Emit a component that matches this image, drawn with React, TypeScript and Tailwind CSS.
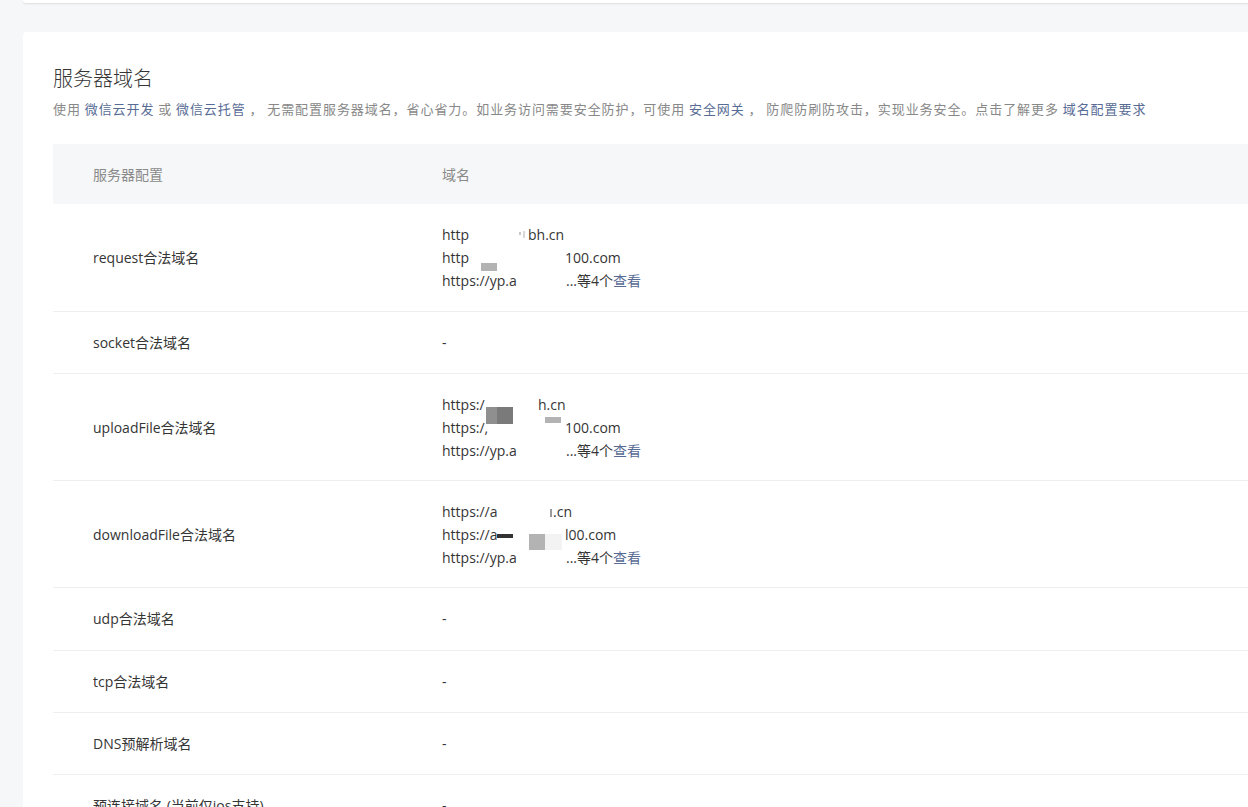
import React from "react";

const LINK = "text-[#576b95]";

type Blk = { l: number; t: number; w: number; h: number; c: string };

function Line({
  prefix,
  gap,
  suffix,
  more,
  blocks = [],
}: {
  prefix: string;
  gap: number;
  suffix: string;
  more?: boolean;
  blocks?: Blk[];
}) {
  return (
    <div className="relative flex h-[23px] items-center whitespace-nowrap">
      <span className="inline-block shrink-0" style={{ width: gap }}>
        {prefix}
      </span>
      <span>{suffix}</span>
      {more && (
        <>
          <span>...等4个</span>
          <span className={LINK}>查看</span>
        </>
      )}
      {blocks.map((b, i) => (
        <span
          key={i}
          className="absolute"
          style={{ left: b.l, top: b.t, width: b.w, height: b.h, background: b.c }}
        />
      ))}
    </div>
  );
}

function Row({
  label,
  pad,
  children,
}: {
  label: string;
  pad: string;
  children: React.ReactNode;
}) {
  return (
    <div className={"flex border-b border-[#eeeeee] leading-[23px] " + pad}>
      <div className="flex w-[389px] shrink-0 items-center pl-[40px]">{label}</div>
      <div className="flex flex-col justify-center">{children}</div>
    </div>
  );
}

const LastLine = () => <Line prefix="https://yp.a" gap={124} suffix="" more />;

const P_FULL = "py-[19px]";
const P_MULTI = "pt-[19px] pb-[18px]";
const P_TALL = "pt-[19px] pb-[20px]";

export default function App() {
  return (
    <div
      className="h-[807px] w-[1248px] overflow-hidden bg-[#f6f7f9]"
      style={{ fontFamily: '"Open Sans", "Noto Sans CJK SC", sans-serif' }}
    >
      <div className="pl-[23px]">
        <div className="h-[3px] w-[1260px] rounded-b-[3px] bg-white shadow-[0_1px_2px_rgba(0,0,0,0.10)]" />
        <div className="mt-[29px] w-[1260px] rounded-[4px] bg-white pl-[30px] pt-[32px]">
          <h1
            className="text-[20px] font-light leading-[28px] text-[#353535]"
            style={{ fontFamily: '"Noto Sans CJK SC", sans-serif' }}
          >
            服务器域名
          </h1>
          <p
            className="mt-[6px] whitespace-nowrap text-[13px] leading-[22px] tracking-[0.93px] text-[#888888]"
            style={{ fontFamily: '"Noto Sans CJK SC", sans-serif' }}
          >
            使用 <span className={LINK}>微信云开发</span> 或 <span className={LINK}>微信云托管</span> ，
            无需配置服务器域名，省心省力。如业务访问需要安全防护，可使用{" "}
            <span className={LINK}>安全网关</span> ， 防爬防刷防攻击，实现业务安全。点击了解更多{" "}
            <span className={LINK}>域名配置要求</span>
          </p>

          <div className="mt-[24px] text-[14px] text-[#353535]">
            <div className="flex h-[60px] items-center bg-[#f6f7f9] text-[#8a8a8a]">
              <div className="w-[389px] shrink-0 pl-[40px]">服务器配置</div>
              <div>域名</div>
            </div>

            <Row label="request合法域名" pad={P_FULL}>
              <Line
                prefix="http"
                gap={86}
                suffix="bh.cn"
                blocks={[
                  { l: 77, t: 9, w: 2, h: 3, c: "#c8c8c8" },
                  { l: 81, t: 8, w: 2, h: 7, c: "#d8d8d8" },
                ]}
              />
              <Line
                prefix="http"
                gap={123}
                suffix="100.com"
                blocks={[{ l: 39, t: 17, w: 16, h: 8, c: "#b3b3b3" }]}
              />
              <LastLine />
            </Row>

            <Row label="socket合法域名" pad={P_FULL}>
              <div className="h-[23px] leading-[23px]">-</div>
            </Row>

            <Row label="uploadFile合法域名" pad={P_MULTI}>
              <Line
                prefix="https:/"
                gap={96}
                suffix="h.cn"
                blocks={[
                  { l: 44, t: 14, w: 11, h: 17, c: "#8f8f8f" },
                  { l: 55, t: 14, w: 16, h: 17, c: "#7a7a7a" },
                ]}
              />
              <Line
                prefix="https:/,"
                gap={123}
                suffix="100.com"
                blocks={[{ l: 103, t: 1, w: 16, h: 6, c: "#b3b3b3" }]}
              />
              <LastLine />
            </Row>

            <Row label="downloadFile合法域名" pad={P_MULTI}>
              <Line
                prefix="https://a"
                gap={111}
                suffix=".cn"
                blocks={[{ l: 108, t: 9, w: 2, h: 8, c: "#9a9a9a" }]}
              />
              <Line
                prefix="https://a"
                gap={123}
                suffix="l00.com"
                blocks={[
                  { l: 55, t: 11, w: 16, h: 4, c: "#333333" },
                  { l: 87, t: 11, w: 16, h: 16, c: "#b3b3b3" },
                  { l: 103, t: 11, w: 17, h: 16, c: "#f3f3f3" },
                ]}
              />
              <LastLine />
            </Row>

            <Row label="udp合法域名" pad={P_TALL}>
              <div className="h-[23px]">-</div>
            </Row>
            <Row label="tcp合法域名" pad={P_FULL}>
              <div className="h-[23px]">-</div>
            </Row>
            <Row label="DNS预解析域名" pad={P_FULL}>
              <div className="h-[23px]">-</div>
            </Row>
            <Row label="预连接域名 (当前仅ios支持)" pad={P_FULL}>
              <div className="h-[23px]">-</div>
            </Row>
          </div>
        </div>
      </div>
    </div>
  );
}
